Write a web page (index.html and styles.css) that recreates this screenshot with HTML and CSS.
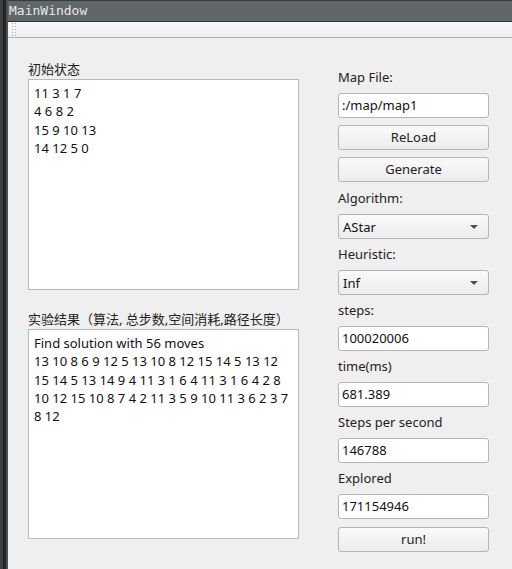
FILE: index.html
```html
<!DOCTYPE html>
<html>
<head>
<meta charset="utf-8">
<link rel="stylesheet" href="styles.css">
</head>
<body>
<div class="desk"></div>
<div class="window">
  <div class="titlebar">MainWindow</div>
  <div class="toolbar">
    <svg class="handle" width="6" height="15" viewBox="0 0 6 15">
      <g fill="#a9a9a9">
        <rect x="0" y="1" width="1" height="1"/><rect x="3" y="1" width="1" height="1"/>
        <rect x="0" y="4" width="1" height="1"/><rect x="3" y="4" width="1" height="1"/>
        <rect x="0" y="7" width="1" height="1"/><rect x="3" y="7" width="1" height="1"/>
        <rect x="0" y="10" width="1" height="1"/><rect x="3" y="10" width="1" height="1"/>
        <rect x="0" y="13" width="1" height="1"/><rect x="3" y="13" width="1" height="1"/>
      </g>
    </svg>
  </div>
  <div class="content">
    <div class="left">
      <div class="label">初始状态</div>
      <div class="textbox tb1">
        <div class="line">11 3 1 7</div>
        <div class="line">4 6 8 2</div>
        <div class="line">15 9 10 13</div>
        <div class="line">14 12 5 0</div>
      </div>
      <div class="label label2">实验结果（算法, 总步数,空间消耗,路径长度）</div>
      <div class="textbox tb2">
        <div class="line">Find solution with 56 moves</div>
        <div class="line">13 10 8 6 9 12 5 13 10 8 12 15 14 5 13 12</div>
        <div class="line">15 14 5 13 14 9 4 11 3 1 6 4 11 3 1 6 4 2 8</div>
        <div class="line">10 12 15 10 8 7 4 2 11 3 5 9 10 11 3 6 2 3 7</div>
        <div class="line">8 12</div>
      </div>
    </div>
    <div class="right">
      <div class="label">Map File:</div>
      <div class="input">:/map/map1</div>
      <div class="button">ReLoad</div>
      <div class="button">Generate</div>
      <div class="label shift">Algorithm:</div>
      <div class="combo"><span>AStar</span><svg width="8" height="4" viewBox="0 0 8 4"><path d="M0 0H8L4 4Z" fill="#505050"/></svg></div>
      <div class="label">Heuristic:</div>
      <div class="combo"><span>Inf</span><svg width="8" height="4" viewBox="0 0 8 4"><path d="M0 0H8L4 4Z" fill="#505050"/></svg></div>
      <div class="label">steps:</div>
      <div class="input">100020006</div>
      <div class="label">time(ms)</div>
      <div class="input">681.389</div>
      <div class="label">Steps per second</div>
      <div class="input">146788</div>
      <div class="label">Explored</div>
      <div class="input">171154946</div>
      <div class="button shift">run!</div>
    </div>
  </div>
</div>
</body>
</html>
```

FILE: styles.css
```css
html, body {
  margin: 0;
  padding: 0;
  height: 100%;
}
body {
  display: flex;
  width: 512px;
  height: 569px;
  overflow: hidden;
  background: #efefef;
  font-family: "Noto Sans", "Noto Sans CJK SC", sans-serif;
  font-size: 13px;
  color: #1e1e1e;
}
.desk {
  width: 8px;
  flex: none;
  background: linear-gradient(to right, #3c3f41 0, #3c3f41 3px, #232323 3px, #232323 6px, #4d4f50 6px, #4d4f50 8px);
}
.window {
  flex: 1;
  display: flex;
  flex-direction: column;
  background: #efefef;
}
.titlebar {
  height: 20px;
  border-top: 1px solid #363a3b;
  border-bottom: 1px solid #2e3132;
  background: #5f6768;
  color: #e8e8e8;
  font-family: "DejaVu Sans Mono", monospace;
  font-size: 13px;
  line-height: 20px;
  padding-left: 1px;
}
.toolbar {
  height: 15px;
  border-bottom: 1px solid #b4b4b4;
  background: linear-gradient(#f8f8f8, #efefef);
  padding-left: 4px;
}
.handle {
  display: block;
}
.content {
  display: flex;
  padding: 23px 23px 0 20px;
  gap: 39px;
}
.left {
  width: 271px;
  display: flex;
  flex-direction: column;
}
.label {
  height: 17px;
  line-height: 17px;
  white-space: nowrap;
  color: #222;
}
.left .label {
  margin-bottom: 1px;
}
.left .label2 {
  margin-top: 21px;
}
.textbox {
  box-sizing: border-box;
  background: #fff;
  border: 1px solid #b9b9b9;
  padding: 4px 5px;
  line-height: 18.33px;
  color: #111;
}
.tb1 { height: 211px; }
.tb2 { height: 210px; }
.line { white-space: nowrap; }
.right {
  width: 151px;
  display: flex;
  flex-direction: column;
  gap: 7px;
  padding-top: 8px;
}
.right .shift {
  margin-top: 1px;
}
.input {
  box-sizing: border-box;
  height: 25px;
  background: #fff;
  border: 1px solid #b4b4b4;
  border-radius: 3px;
  padding-left: 3px;
  line-height: 23px;
  color: #111;
}
.button {
  box-sizing: border-box;
  height: 25px;
  border: 1px solid #b4b4b4;
  border-radius: 3px;
  background: linear-gradient(#fafafa, #ececec);
  text-align: center;
  line-height: 23px;
  color: #1e1e1e;
}
.combo {
  box-sizing: border-box;
  height: 25px;
  border: 1px solid #b4b4b4;
  border-radius: 3px;
  background: linear-gradient(#fafafa, #ececec);
  display: flex;
  align-items: center;
  justify-content: space-between;
  padding: 0 10px 0 4px;
  color: #111;
}
.combo svg {
  display: block;
}
```
